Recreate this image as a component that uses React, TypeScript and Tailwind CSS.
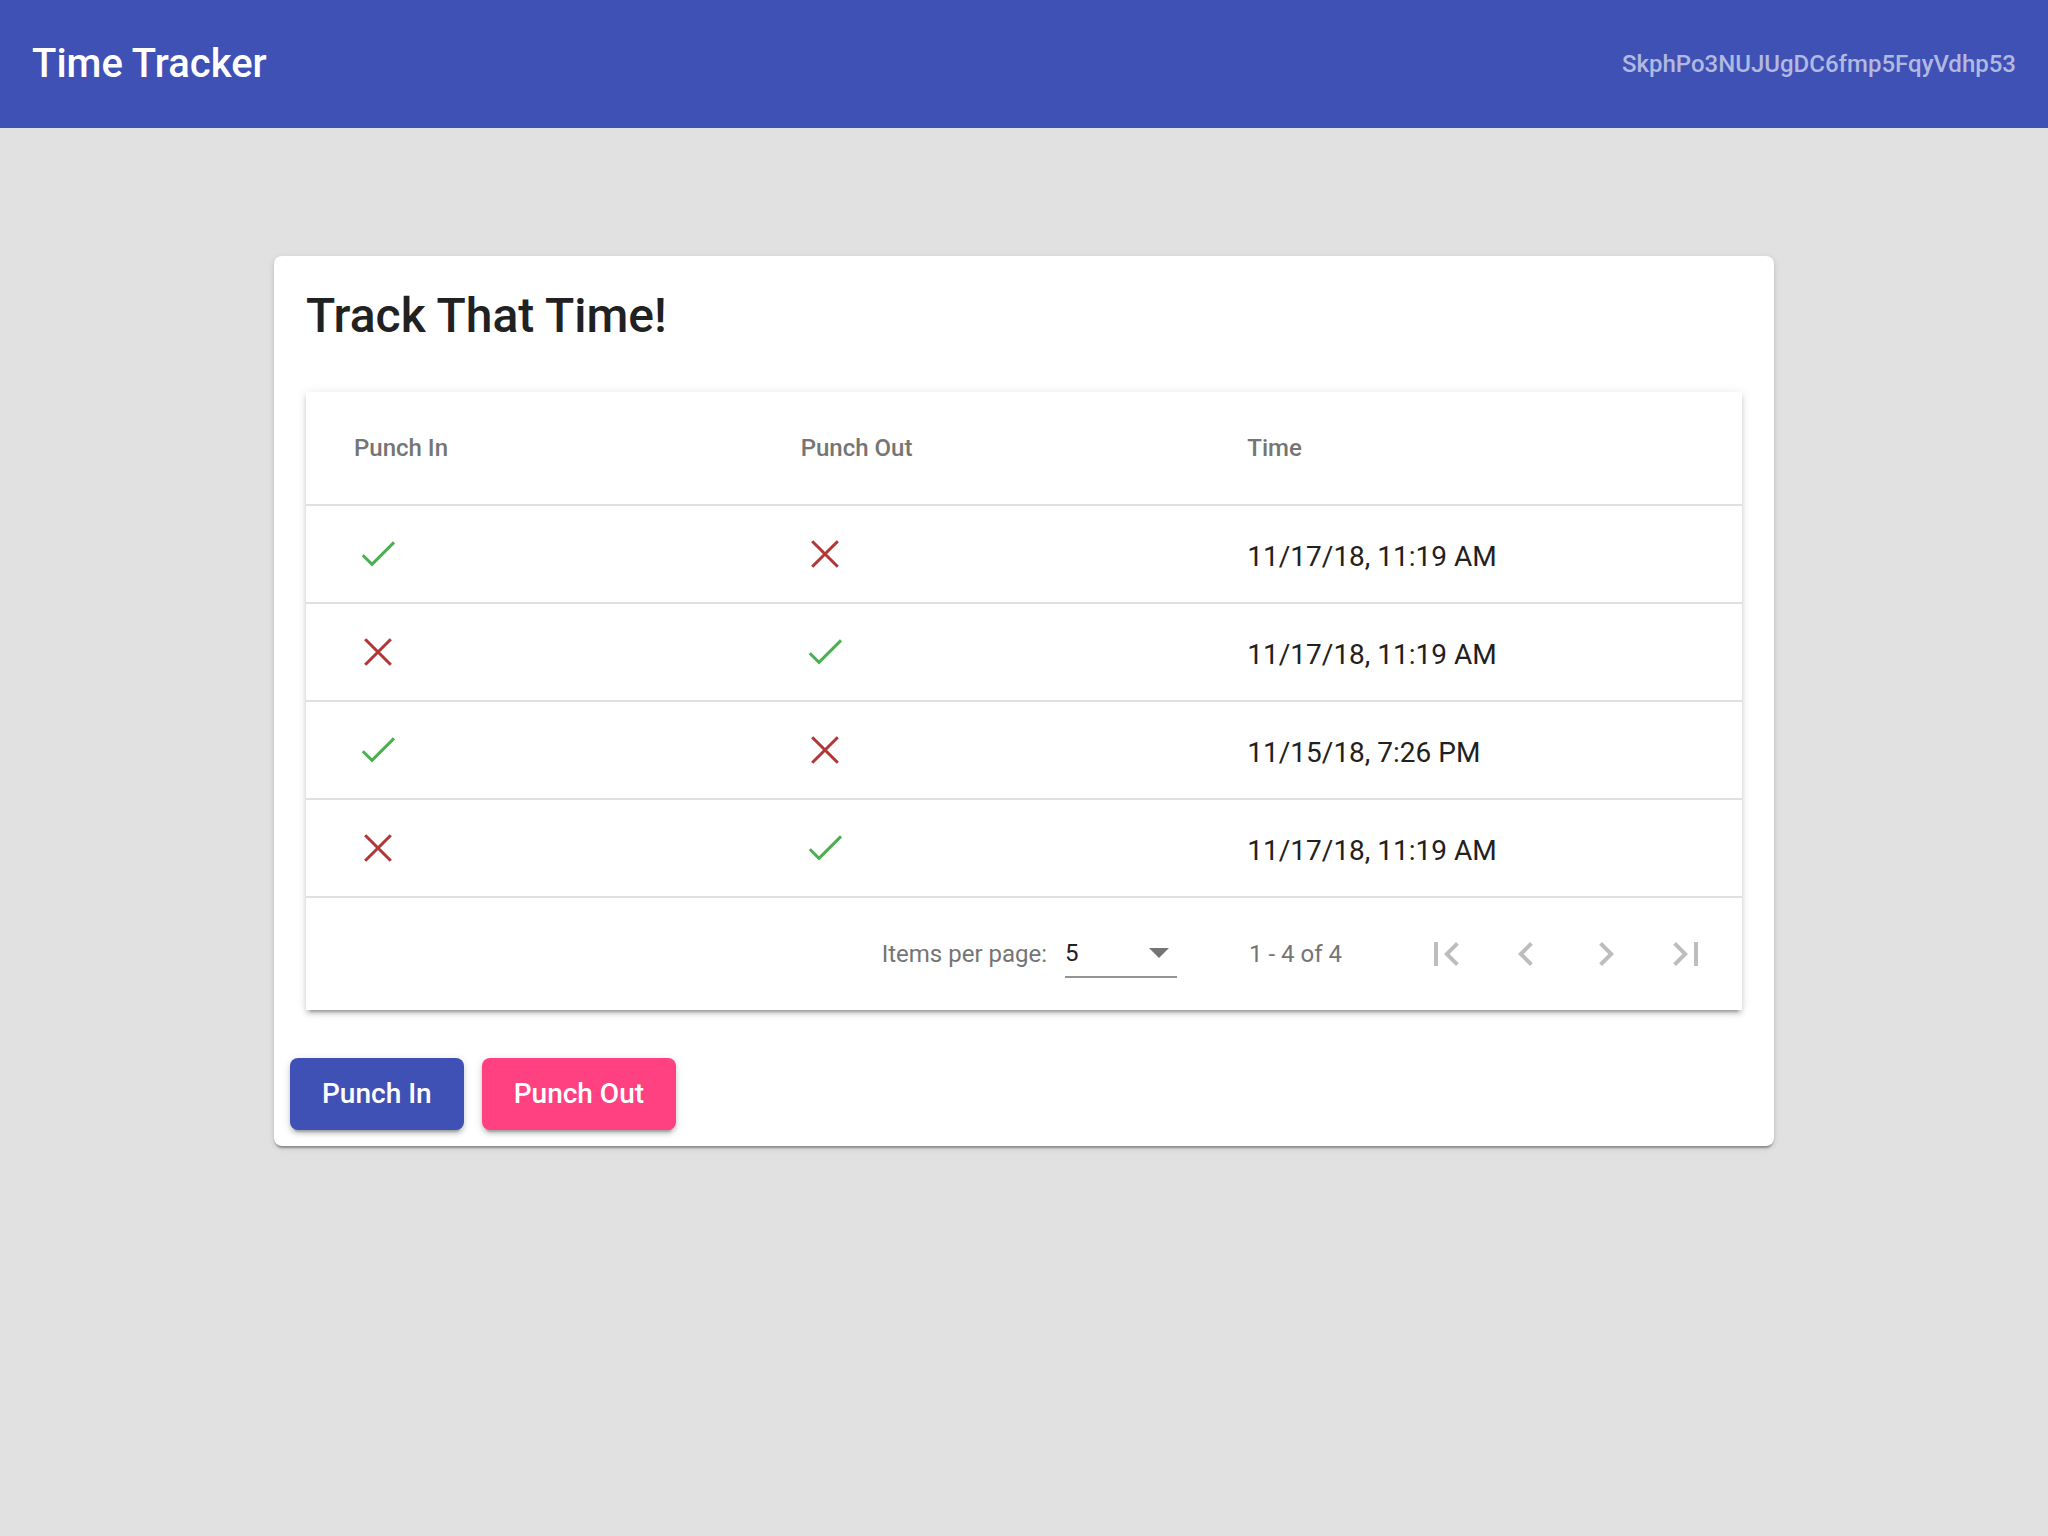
import React from 'react';

type Entry = { punchIn: boolean; time: string };

const entries: Entry[] = [
  { punchIn: true, time: '11/17/18, 11:19 AM' },
  { punchIn: false, time: '11/17/18, 11:19 AM' },
  { punchIn: true, time: '11/15/18, 7:26 PM' },
  { punchIn: false, time: '11/17/18, 11:19 AM' },
];

function CheckIcon() {
  return (
    <svg viewBox="0 0 24 24" className="w-[48px] h-[48px]" fill="none">
      <polyline points="4.4,12.6 9,17.2 20,6.2" stroke="#4caf50" strokeWidth="1.5" />
    </svg>
  );
}

function CloseIcon() {
  return (
    <svg viewBox="0 0 24 24" className="w-[48px] h-[48px]" fill="none">
      <path d="M5.6 5.6L18.4 18.4M18.4 5.6L5.6 18.4" stroke="#b23636" strokeWidth="1.5" />
    </svg>
  );
}

const pagerIcons = [
  'M18.41 16.59L13.82 12l4.59-4.59L17 6l-6 6 6 6zM6 6h2v12H6z',
  'M15.41 7.41L14 6l-6 6 6 6 1.41-1.41L10.83 12z',
  'M10 6L8.59 7.41 13.17 12l-4.58 4.59L10 18l6-6z',
  'M5.59 7.41L10.18 12l-4.59 4.59L7 18l6-6-6-6zM16 6h2v12h-2z',
];

function Mark({ ok }: { ok: boolean }) {
  return ok ? <CheckIcon /> : <CloseIcon />;
}

export default function App() {
  return (
    <div className="min-h-screen bg-[#e1e1e1] font-['Roboto',sans-serif]">
      <header className="h-[128px] bg-[#3f51b5] px-[32px] flex items-center justify-between font-medium">
        <span className="text-[40px] text-white">Time Tracker</span>
        <span className="text-[24px] text-[#b2b9e1]">SkphPo3NUJUgDC6fmp5FqyVdhp53</span>
      </header>

      <main className="pt-[128px] pb-[64px]">
        <div className="w-[1500px] mx-auto bg-white rounded-[8px] px-[32px] pt-[32px] pb-[16px] shadow-[0_4px_2px_-2px_rgba(0,0,0,0.2),0_2px_2px_0_rgba(0,0,0,0.14),0_2px_6px_0_rgba(0,0,0,0.12)]">
          <h1 className="text-[48px] leading-[56px] font-medium text-[#212121] mb-[48px]">Track That Time!</h1>

          <div className="bg-white shadow-[0_6px_2px_-4px_rgba(0,0,0,0.2),0_4px_4px_0_rgba(0,0,0,0.14),0_2px_10px_0_rgba(0,0,0,0.12)]">
            <div className="h-[114px] grid grid-cols-3 items-center px-[48px] border-b-2 border-[#e0e0e0] text-[24px] font-medium text-[#757575]">
              <span>Punch In</span>
              <span>Punch Out</span>
              <span>Time</span>
            </div>
            {entries.map((e, i) => (
              <div key={i} className="h-[98px] grid grid-cols-3 items-center px-[48px] border-b-2 border-[#e0e0e0] text-[28px] text-[#212121]">
                <Mark ok={e.punchIn} />
                <Mark ok={!e.punchIn} />
                <span className="pt-[6px]">{e.time}</span>
              </div>
            ))}
            <div className="h-[112px] flex items-center justify-end px-[16px] text-[24px] text-[#757575]">
              <span className="mr-[18px]">Items per page:</span>
              <div className="w-[112px] h-[48px] mr-[48px] border-b-2 border-[#949494] flex items-center justify-between pr-[8px]">
                <span className="text-[#212121]">5</span>
                <svg viewBox="0 0 20 10" className="w-[20px] h-[10px]">
                  <path d="M0 0h20L10 10z" fill="#757575" />
                </svg>
              </div>
              <span className="ml-[24px] mr-[64px]">1 - 4 of 4</span>
              {pagerIcons.map((d, i) => (
                <button key={i} className="w-[80px] h-[80px] flex items-center justify-center">
                  <svg viewBox="0 0 24 24" className="w-[48px] h-[48px]">
                    <path d={d} fill="#bdbdbd" />
                  </svg>
                </button>
              ))}
            </div>
          </div>

          <div className="mt-[48px] -ml-[16px] flex gap-[18px]">
            <button className="h-[72px] px-[32px] rounded-[8px] bg-[#3f51b5] text-white text-[28px] font-medium shadow-[0_6px_2px_-4px_rgba(0,0,0,0.2),0_4px_4px_0_rgba(0,0,0,0.14),0_2px_10px_0_rgba(0,0,0,0.12)]">
              Punch In
            </button>
            <button className="h-[72px] px-[32px] rounded-[8px] bg-[#ff4081] text-white text-[28px] font-medium shadow-[0_6px_2px_-4px_rgba(0,0,0,0.2),0_4px_4px_0_rgba(0,0,0,0.14),0_2px_10px_0_rgba(0,0,0,0.12)]">
              Punch Out
            </button>
          </div>
        </div>
      </main>
    </div>
  );
}
